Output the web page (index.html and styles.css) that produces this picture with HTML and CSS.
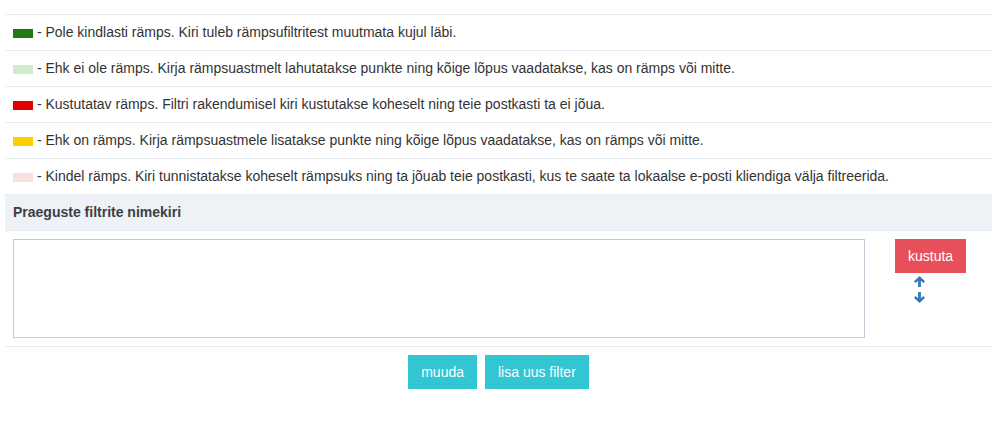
FILE: index.html
```html
<!DOCTYPE html>
<html lang="et">
<head>
  <meta charset="UTF-8">
  <title>Rämpsufiltrid</title>
  <link rel="stylesheet" href="styles.css">
</head>
<body>

<div class="filters">
  <div class="spacer"></div>

  <div class="row"><span class="swatch green"></span> - Pole kindlasti rämps. Kiri tuleb rämpsufiltritest muutmata kujul läbi.</div>
  <div class="row"><span class="swatch light-green"></span> - Ehk ei ole rämps. Kirja rämpsuastmelt lahutatakse punkte ning kõige lõpus vaadatakse, kas on rämps või mitte.</div>
  <div class="row"><span class="swatch red"></span> - Kustutatav rämps. Filtri rakendumisel kiri kustutakse koheselt ning teie postkasti ta ei jõua.</div>
  <div class="row"><span class="swatch yellow"></span> - Ehk on rämps. Kirja rämpsuastmele lisatakse punkte ning kõige lõpus vaadatakse, kas on rämps või mitte.</div>
  <div class="row"><span class="swatch pink"></span> - Kindel rämps. Kiri tunnistatakse koheselt rämpsuks ning ta jõuab teie postkasti, kus te saate ta lokaalse e-posti kliendiga välja filtreerida.</div>

  <div class="row heading">Praeguste filtrite nimekiri</div>

  <div class="row filter-row">
    <textarea class="filter-list"></textarea>
    <div class="actions">
      <button class="btn red-btn">kustuta</button>
      <div class="arrows">
        <svg width="11" height="11" viewBox="0 0 11 11"><path d="M5.5 0 L11 5.3 L9.3 7 L6.9 4.7 L6.9 11 L4.1 11 L4.1 4.7 L1.7 7 L0 5.3 Z" fill="#337ab7"/></svg>
        <svg width="11" height="11" viewBox="0 0 11 11"><path d="M5.5 11 L11 5.7 L9.3 4 L6.9 6.3 L6.9 0 L4.1 0 L4.1 6.3 L1.7 4 L0 5.7 Z" fill="#337ab7"/></svg>
      </div>
    </div>
  </div>

  <div class="row buttons">
    <button class="btn cyan">muuda</button>
    <button class="btn cyan">lisa uus filter</button>
  </div>
</div>

</body>
</html>
```

FILE: styles.css
```css
* {
  margin: 0;
  padding: 0;
  box-sizing: border-box;
}

body {
  background: #fff;
  color: #333;
  font-family: "Liberation Sans", Arial, sans-serif;
  font-size: 14px;
}

.filters {
  width: 987px;
  margin-left: 5px;
}

.spacer {
  height: 14px;
}

.row {
  border-top: 1px solid #e7ecf1;
  padding: 8px 8px;
  line-height: 19px;
  height: 36px;
}

.swatch {
  display: inline-block;
  width: 20px;
  height: 9px;
  vertical-align: -1px;
}

.green { background: #217a14; }
.light-green { background: #cfeccb; }
.red { background: #e40000; }
.yellow { background: #ffcd00; }
.pink { background: #f9dfe0; }

.heading {
  background: #eef1f5;
  font-weight: bold;
  color: #3b3f45;
}

.filter-row {
  display: flex;
  height: auto;
  padding: 8px 8px;
}

.filter-list {
  width: 852px;
  height: 99px;
  border: 1px solid #c2cad8;
  resize: none;
  font-family: inherit;
}

.actions {
  flex: 1;
  padding-left: 30px;
}

.arrows {
  width: 49px;
  display: flex;
  flex-direction: column;
  align-items: center;
  gap: 5px;
  margin-top: 3px;
}

.arrows svg {
  display: block;
}

.btn {
  font-family: "Liberation Sans", Arial, sans-serif;
  font-size: 14px;
  line-height: 20px;
  padding: 6px 12px;
  border: 1px solid transparent;
  color: #fff;
  cursor: pointer;
}

.red-btn {
  background: #e7505a;
}

.cyan {
  background: #32c5d2;
}

.buttons {
  display: flex;
  justify-content: center;
  gap: 8px;
  height: auto;
  padding: 8px;
}
```
